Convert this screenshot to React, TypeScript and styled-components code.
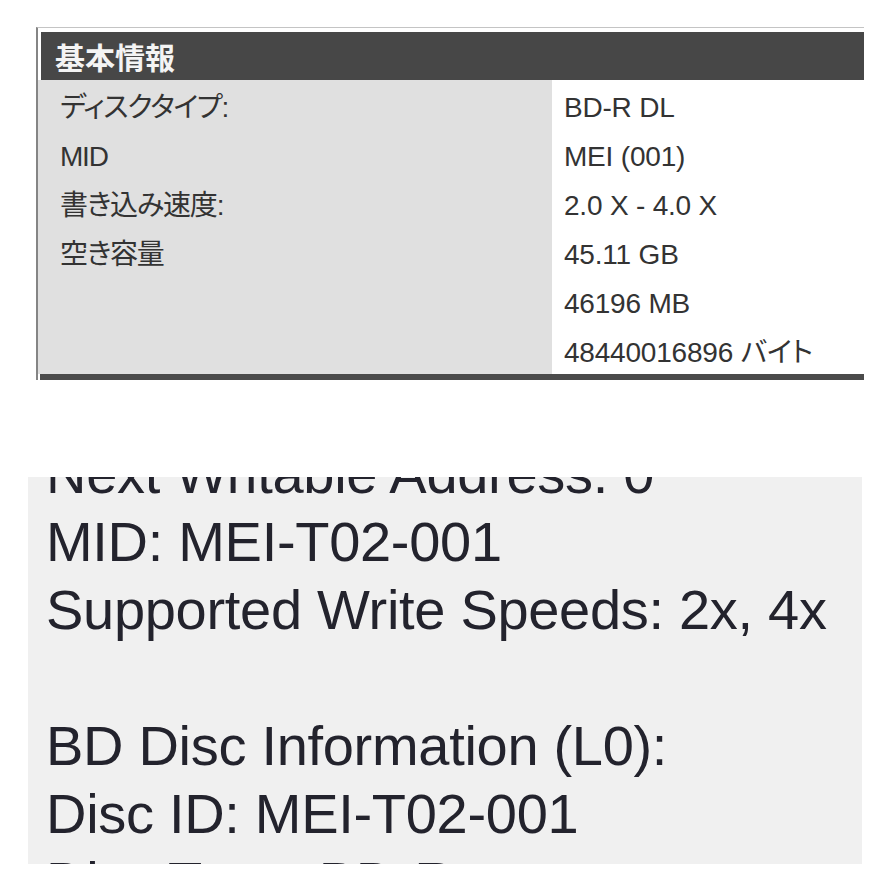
import styled, { createGlobalStyle } from 'styled-components';

const GlobalStyle = createGlobalStyle`
  html, body {
    margin: 0;
    padding: 0;
    background: #ffffff;
  }
  body {
    font-family: "Liberation Sans", "Noto Sans CJK JP", sans-serif;
  }
`;

const infoRows: [string, string][] = [
  ['ディスクタイプ:', 'BD-R DL'],
  ['MID', 'MEI (001)'],
  ['書き込み速度:', '2.0 X - 4.0 X'],
  ['空き容量', '45.11 GB'],
  ['', '46196 MB'],
  ['', '48440016896 バイト'],
];

const logLines = [
  'Next Writable Address: 0',
  'MID: MEI-T02-001',
  'Supported Write Speeds: 2x, 4x',
  '',
  'BD Disc Information (L0):',
  'Disc ID: MEI-T02-001',
  'Disc Type: BD-R',
];

const Page = styled.div`
  width: 894px;
  height: 894px;
  display: flex;
  flex-direction: column;
  overflow: hidden;
`;

const Frame = styled.section`
  margin: 27px 0 0 36px;
  width: 826px;
  border-top: 1px solid #c4c4c4;
  border-left: 2px solid #858585;
  padding-top: 4px;
  display: flex;
  flex-direction: column;
`;

const Header = styled.div`
  margin-left: 3px;
  height: 48px;
  background: #474747;
  color: #f4f4f4;
  font-family: "Noto Sans CJK JP", sans-serif;
  font-weight: 700;
  font-size: 30px;
  line-height: 48px;
  padding-left: 14px;
`;

const Table = styled.div`
  display: grid;
  grid-template-columns: 514px 1fr;
  grid-auto-rows: 49px;
`;

const Cell = styled.div<{ $label?: boolean }>`
  box-sizing: border-box;
  height: 49px;
  padding: 6px 0 0 ${(p) => (p.$label ? '22px' : '12px')};
  line-height: 43px;
  font-size: 28px;
  letter-spacing: ${(p) => (p.$label ? '-1.2px' : '-0.2px')};
  color: #333333;
  background: ${(p) => (p.$label ? '#e0e0e0' : '#ffffff')};
  font-feature-settings: "palt";
  white-space: nowrap;
`;

const BottomBar = styled.div`
  margin-left: 2px;
  height: 6px;
  background: #4b4b4b;
`;

const LogPanel = styled.section`
  margin: 97px 0 0 28px;
  width: 834px;
  height: 387px;
  box-sizing: border-box;
  padding-left: 18px;
  background: #f0f0f0;
  overflow: hidden;
`;

const LogText = styled.div`
  margin-top: -37px;
  font-size: 56px;
  line-height: 68px;
  letter-spacing: -0.3px;
  color: #23232d;
  white-space: pre;
`;

const LogLine = styled.div`
  height: 68px;
`;

export default function App() {
  return (
    <>
      <GlobalStyle />
      <Page>
        <Frame>
          <Header>基本情報</Header>
          <Table>
            {infoRows.map(([label, value], i) => (
              <>
                <Cell key={`l${i}`} $label>
                  {label}
                </Cell>
                <Cell key={`v${i}`}>{value}</Cell>
              </>
            ))}
          </Table>
          <BottomBar />
        </Frame>
        <LogPanel>
          <LogText>
            {logLines.map((line, i) => (
              <LogLine key={i}>{line}</LogLine>
            ))}
          </LogText>
        </LogPanel>
      </Page>
    </>
  );
}
